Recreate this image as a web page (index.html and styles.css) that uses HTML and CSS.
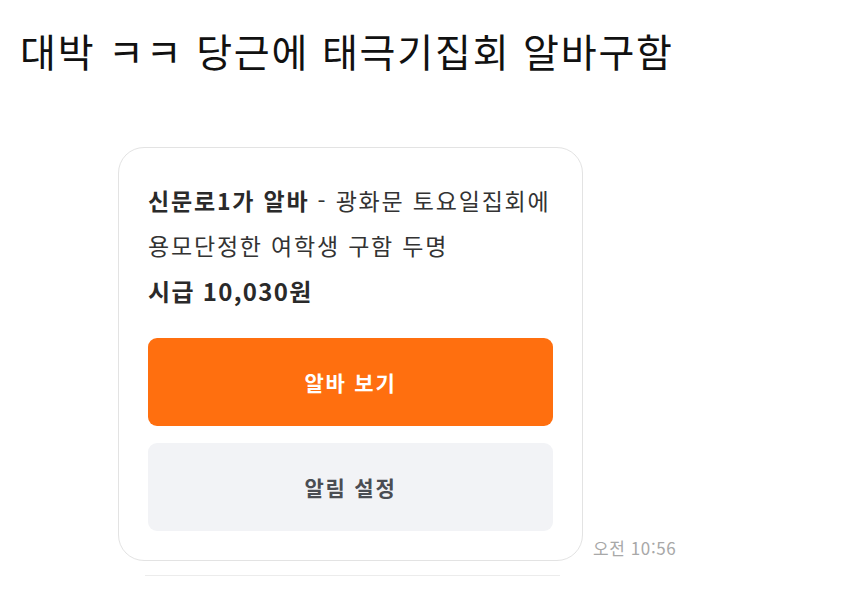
FILE: index.html
```html
<!DOCTYPE html>
<html lang="ko">
<head>
<meta charset="utf-8">
<link rel="stylesheet" href="styles.css">
</head>
<body>
<h1 class="title">대박 ㅋㅋ 당근에 태극기집회 알바구함</h1>
<div class="row">
  <div class="card">
    <p class="desc"><strong>신문로1가 알바</strong> - 광화문 토요일집회에<br>용모단정한 여학생 구함 두명</p>
    <p class="wage">시급 10,030원</p>
    <div class="btn btn-primary">알바 보기</div>
    <div class="btn btn-secondary">알림 설정</div>
  </div>
  <span class="time">오전 10:56</span>
</div>
<div class="sep"></div>
</body>
</html>
```
FILE: styles.css
```css
html, body {
  margin: 0;
  padding: 0;
  background: #fff;
}
body {
  width: 850px;
  height: 610px;
  overflow: hidden;
  font-family: "Noto Sans CJK KR", "Noto Sans", sans-serif;
  color: #222;
}
.title {
  margin: 0;
  padding: 21px 0 0 20px;
  font-size: 39px;
  font-weight: 400;
  line-height: 58px;
  color: #111;
  letter-spacing: 1.8px;
}
.row {
  display: flex;
  align-items: flex-end;
  margin-top: 68px;
  padding-left: 118px;
}
.card {
  width: 465px;
  box-sizing: border-box;
  border: 1.5px solid #e3e3e3;
  border-radius: 26px;
  padding: 30px 29px 29px 29px;
}
.desc {
  margin: 0;
  font-size: 23px;
  line-height: 45px;
  color: #333;
  letter-spacing: 1.8px;
}
.desc strong {
  font-weight: 700;
  color: #2a2a2a;
}
.wage {
  margin: 0;
  font-size: 24px;
  line-height: 45px;
  font-weight: 700;
  color: #2a2a2a;
  letter-spacing: 1.3px;
}
.btn {
  height: 88px;
  border-radius: 9px;
  display: flex;
  align-items: center;
  justify-content: center;
  font-size: 21px;
  font-weight: 700;
  letter-spacing: 1.8px;
}
.btn-primary {
  margin-top: 25px;
  background: #ff6f0f;
  color: #fff;
}
.btn-secondary {
  margin-top: 17px;
  background: #f2f3f6;
  color: #4a4d53;
}
.time {
  margin: 0 0 2px 10px;
  font-size: 17px;
  color: #a8a8a8;
  line-height: 22px;
  letter-spacing: 0.6px;
}
.sep {
  margin: 14px 0 0 145px;
  width: 415px;
  height: 1px;
  background: #ececec;
}
```
